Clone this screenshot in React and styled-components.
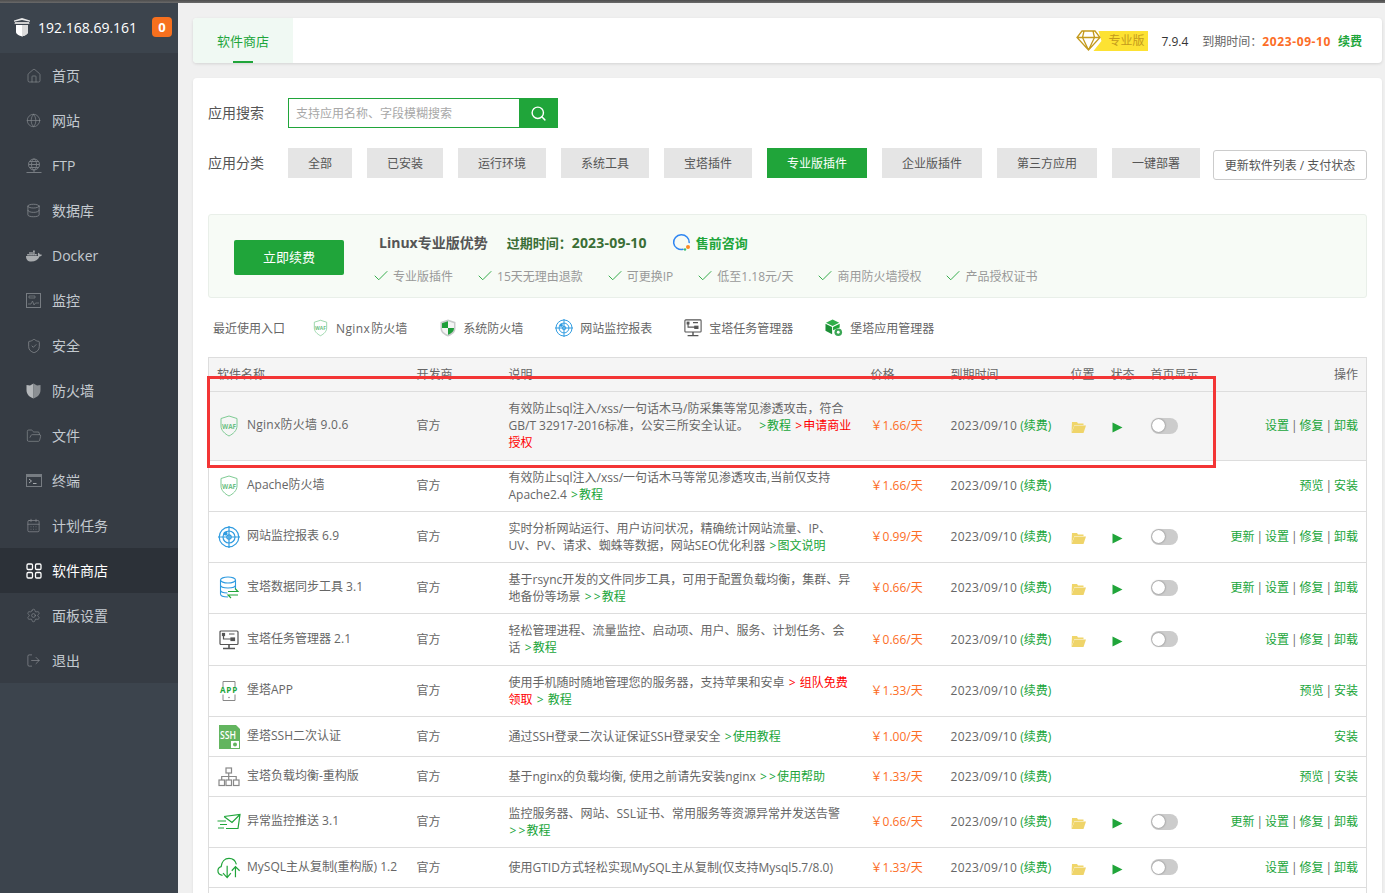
import React from 'react';
import styled, { createGlobalStyle } from 'styled-components';
import {
  House,
  Globe,
  Database,
  ShieldCheck,
  FolderOpen,
  CalendarDays,
  Settings,
  LogOut,
  Search,
  Check,
} from 'lucide-react';
import { FaDocker } from 'react-icons/fa';

const GREEN = '#20a53a';
const ORANGE = '#fc6d26';

const GlobalStyle = createGlobalStyle`
  html, body {
    margin: 0;
    padding: 0;
    height: 893px;
    overflow: hidden;
    background: #f0f0f0;
    font-family: "Open Sans", "Noto Sans CJK SC", sans-serif;
    font-size: 12px;
    color: #666;
  }
  * { box-sizing: border-box; }
`;

/* ---------- drawn icons ---------- */

const LogoIcon = () => (
  <svg width="18" height="20" viewBox="1 0 18 20">
    <path d="M2 3.500 10 1l8 2.500v1.200L10 3 2 4.700z" fill="#e8e8e8" />
    <path d="M3 5h14l.5 2H2.500z" fill="#cfcfcf" />
    <path d="M4 8h12v7c0 2-3 3.500-6 4.500-3-1-6-2.500-6-4.500z" fill="#fff" />
    <path d="M10 8h6v7c0 2-3 3.500-6 4.500z" fill="#dcdcdc" />
  </svg>
);

const FtpIcon = () => (
  <svg width="16" height="16" viewBox="0 0 16 16" fill="none" stroke="#777c82" strokeWidth="1">
    <circle cx="8" cy="6.500" r="5.500" />
    <ellipse cx="8" cy="6.500" rx="2.500" ry="5.500" />
    <path d="M2.500 6.500h11M3.500 3.500h9M3.500 9.500h9M8 12v2M0.500 14.500h15" />
  </svg>
);

const MonitorIcon = () => (
  <svg width="15" height="15" viewBox="0 0 15 15" fill="none" stroke="#777c82">
    <rect x="0.500" y="0.500" width="14" height="14" />
    <path d="M3 3h6v2H3zM2 11h3l1.500-3 1.500 4 1.500-2H13" strokeWidth="0.800" />
  </svg>
);

const FirewallIcon = () => (
  <svg width="15" height="16" viewBox="0 0 15 16">
    <path d="M0.500 2 4 2.500 7.500 0.500v15C3 14 0.500 11 0.500 7z" fill="#b4b7ba" />
    <path d="M14.500 2 11 2.500 7.500 0.500v15C12 14 14.500 11 14.500 7z" fill="#8b8f93" />
  </svg>
);

const TerminalIcon = () => (
  <svg width="16" height="13" viewBox="0 0 16 13" fill="none">
    <rect x="0.500" y="0.500" width="15" height="12" stroke="#777c82" />
    <rect x="0.500" y="0.500" width="15" height="2.500" fill="#777c82" />
    <path d="M3 5l2.500 2L3 9M7 9.500h3.500" stroke="#a5a9ad" />
  </svg>
);

const GridIcon = () => (
  <svg width="16" height="16" viewBox="0 0 16 16" fill="none" stroke="#fff" strokeWidth="1.300">
    <rect x="1" y="1" width="5.500" height="5.500" rx="1.200" />
    <rect x="9.500" y="1" width="5.500" height="5.500" rx="1.200" />
    <rect x="1" y="9.500" width="5.500" height="5.500" rx="1.200" />
    <rect x="9.500" y="9.500" width="5.500" height="5.500" rx="1.200" />
  </svg>
);

const DiamondIcon = () => (
  <svg width="25" height="21" viewBox="0 0 25 21" fill="none" stroke="#c49a1d" strokeWidth="1.300">
    <path d="M6 1h13l5 6.500L12.500 20 1 7.500zM1 7.500h23M8 1 6.500 7.500l6 12.500 6-12.500L17 1" />
  </svg>
);

const ChatIcon = () => (
  <svg width="20" height="19" viewBox="0 0 20 19" fill="none">
    <path d="M11 16.300A7.800 7.300 0 1 1 17.200 9.500" stroke="#2f86f2" strokeWidth="1.500" strokeLinecap="round" />
    <circle cx="16" cy="14" r="2" fill="#fc8a26" />
    <circle cx="13" cy="16.500" r="1.200" fill="#3cc06b" />
  </svg>
);

const WafIcon = ({ size = 22 }) => (
  <svg width={size} height={size} viewBox="0 0 22 22" fill="none">
    <path d="M11 1 19 3.500V11c0 4.500-4 8-8 10-4-2-8-5.500-8-10V3.500z" stroke="#7fcb94" strokeWidth="1" />
    <text x="11" y="13.500" textAnchor="middle" fontSize="7.500" fontWeight="700" fill="#6cc084" fontFamily="Open Sans" textLength="14" lengthAdjust="spacingAndGlyphs">WAF</text>
  </svg>
);

const RadarIcon = ({ size = 22 }) => (
  <svg width={size} height={size} viewBox="0 0 22 22" fill="none" stroke="#2f9be0" strokeWidth="1.200">
    <circle cx="11" cy="11" r="9.800" />
    <circle cx="11" cy="11" r="6" />
    <circle cx="11" cy="11" r="2.200" />
    <path d="M11 0v22M0 11h22" />
    <circle cx="7.500" cy="7.500" r="1.500" fill="#2f9be0" />
  </svg>
);

const SyncIcon = () => (
  <svg width="22" height="24" viewBox="0 0 22 24" fill="none" stroke="#2f9be0" strokeWidth="1.100">
    <ellipse cx="10" cy="4" rx="7.500" ry="3" />
    <path d="M2.500 4v14c0 2 3.500 3 7.500 3M17.500 4v9M2.500 9c0 2 3.500 3 7.500 3s7.500-1 7.500-3M2.500 14c0 2 3.500 3 7 3" />
    <path d="M10 15.500h10l-3-3M20 19H10l3 3" stroke="#20a53a" />
  </svg>
);

const TaskIcon = ({ size = 20 }) => (
  <svg width={size} height={size} viewBox="0 0 20 20" fill="none" stroke="#555" strokeWidth="1.200">
    <rect x="1" y="1" width="18" height="13.500" rx="1" />
    <path d="M4.500 4v5h8M10 4h5.500" />
    <rect x="3.500" y="3.500" width="2" height="2" fill="#555" />
    <rect x="12" y="8" width="3.500" height="2.500" fill="#555" />
    <path d="M10 14.500V18M4 18.500h12" strokeWidth="1.600" />
  </svg>
);

const CubeIcon = () => (
  <svg width="18" height="18" viewBox="0 0 19 19">
    <path d="M8 0.500 15 4 8 7.500 1 4z" fill="#2fae4a" />
    <path d="M0.500 5 7.500 8.500V16L0.500 12.500z" fill="#1c8f36" />
    <path d="M15.500 5 8.500 8.500V12l7-3z" fill="#20a53a" />
    <circle cx="14" cy="14" r="4" fill="#3aa655" />
    <circle cx="14" cy="14" r="1.500" fill="#fff" />
  </svg>
);

const GuardIcon = () => (
  <svg width="16" height="18" viewBox="0 0 16 18">
    <path d="M8 0.500 15.500 3v6.500c0 4-3.500 6.500-7.500 8-4-1.500-7.500-4-7.500-8V3z" fill="#c9cbcc" />
    <path d="M8 2.300 2 4.300V9h6zM8 9v6.800c3-1.200 6-3.200 6-6.800z" fill="#1f9e3a" />
    <path d="M8 2.300V9h6V4.300zM8 9H2c0 3.600 3 5.600 6 6.800z" fill="#f4f4f4" />
  </svg>
);

const AppIcon = () => (
  <svg width="20" height="22" viewBox="0 0 20 22" fill="none">
    <path d="M4 7V1.500h12V7M4 14.500v6h12v-6" stroke="#888" />
    <circle cx="10" cy="17.500" r="0.800" fill="#888" />
    <text x="10" y="13" textAnchor="middle" fontSize="8" fontWeight="700" fill="#20a53a" fontFamily="Open Sans" letterSpacing="0.800">APP</text>
  </svg>
);

const SshIcon = () => (
  <svg width="21" height="24" viewBox="0 0 21 24">
    <path d="M0 0h17l4 4v20H0z" fill="#63b55f" />
    <text x="1" y="13.500" fontSize="11" fontWeight="600" fill="#fff" fontFamily="Open Sans" textLength="16" lengthAdjust="spacingAndGlyphs">SSH</text>
    <rect x="12" y="16" width="8" height="7" fill="#fff" />
    <circle cx="16" cy="19.500" r="2" fill="#63b55f" />
  </svg>
);

const TreeIcon = () => (
  <svg width="22" height="20" viewBox="0 0 22 20" fill="none" stroke="#888" strokeWidth="1.200">
    <rect x="8" y="1" width="5.500" height="5" />
    <rect x="1" y="13" width="5.500" height="5.500" />
    <rect x="8" y="13" width="5.500" height="5.500" />
    <rect x="15.500" y="13" width="5.500" height="5.500" />
    <path d="M10.700 6v7M3.700 13V9.500h14.500V13" />
  </svg>
);

const MailIcon = () => (
  <svg width="24" height="18" viewBox="0 0 24 18" fill="none" stroke="#20a53a" strokeWidth="1.200">
    <path d="M7 3.500 23 1.500 21 15.500H9M7 3.500l8 6 8-8M0.500 8H9M3 11.500h7M1 15h6" />
  </svg>
);

const CloudIcon = () => (
  <svg width="26" height="24" viewBox="0 0 26 24" fill="none" stroke="#20a53a" strokeWidth="1.300">
    <path d="M6 20C3 19.500 1 17.500 1 15c0-2.500 1.500-4 3.500-4.500C5 5 8.500 1.500 13 1.500c4 0 7 2.500 8 6.500M11 9.500V22M6.500 17.500 11 22.500l4-5M20 22V11M16 15l4-4.500 4.500 4.500" />
  </svg>
);

const FolderIcon = () => (
  <svg width="15" height="11" viewBox="0 0 15 11">
    <path d="M1 0h5l1 1.500h5.500V3H3.500L0.500 10.500z" fill="#f0d66a" />
    <path d="M3.500 3.500H15L12.500 11H0.500z" fill="#efd469" />
  </svg>
);

const PlayIcon = () => (
  <svg width="12" height="11" viewBox="0 0 12 11">
    <path d="M1.500 0.500 11.500 5.500 1.500 10.500z" fill={GREEN} />
  </svg>
);

/* ---------- data ---------- */

const menu = [
  { label: '首页', icon: <House size={16} strokeWidth={1} color="#8a8e93" /> },
  { label: '网站', icon: <Globe size={15} strokeWidth={1} color="#8a8e93" /> },
  { label: 'FTP', latin: true, icon: <FtpIcon /> },
  { label: '数据库', icon: <Database size={15} strokeWidth={1.200} color="#8a8e93" /> },
  { label: 'Docker', latin: true, icon: <FaDocker size={16} color="#a9acaf" /> },
  { label: '监控', icon: <MonitorIcon /> },
  { label: '安全', icon: <ShieldCheck size={16} strokeWidth={1.100} color="#8a8e93" /> },
  { label: '防火墙', icon: <FirewallIcon /> },
  { label: '文件', icon: <FolderOpen size={16} strokeWidth={1} color="#8a8e93" /> },
  { label: '终端', icon: <TerminalIcon /> },
  { label: '计划任务', icon: <CalendarDays size={15} strokeWidth={1.100} color="#8a8e93" /> },
  { label: '软件商店', icon: <GridIcon />, active: true },
  { label: '面板设置', icon: <Settings size={15} strokeWidth={1} color="#8a8e93" /> },
  { label: '退出', icon: <LogOut size={15} strokeWidth={1.100} color="#8a8e93" /> },
];

const categories = ['全部', '已安装', '运行环境', '系统工具', '宝塔插件', '专业版插件', '企业版插件', '第三方应用', '一键部署'];
const perks = ['专业版插件', '15天无理由退款', '可更换IP', '低至1.18元/天', '商用防火墙授权', '产品授权证书'];

const G = styled.a`
  color: ${GREEN};
`;
const R = styled.a`
  color: #f00;
`;
const Ar = styled.span`
  display: inline-block;
  width: 9px;
  text-align: center;
`;

const plugins = [
  {
    h: 69, hover: true, icon: <WafIcon />, name: 'Nginx防火墙 9.0.6', spaced: true, price: '1.66', running: true,
    ops: ['设置', '修复', '卸载'],
    desc: <>有效防止sql注入/xss/一句话木马/防采集等常见渗透攻击，符合<br />GB/T 32917-2016标准，公安三所安全认证。&nbsp;&nbsp; <G><Ar>&gt;</Ar>教程</G> <R><Ar>&gt;</Ar>申请商业</R><br /><R>授权</R></>,
  },
  {
    h: 51, icon: <WafIcon />, name: 'Apache防火墙', price: '1.66',
    ops: ['预览', '安装'],
    desc: <>有效防止sql注入/xss/一句话木马等常见渗透攻击,当前仅支持<br />Apache2.4 <G><Ar>&gt;</Ar>教程</G></>,
  },
  {
    h: 51, icon: <RadarIcon />, name: '网站监控报表 6.9', price: '0.99', running: true,
    ops: ['更新', '设置', '修复', '卸载'],
    desc: <>实时分析网站运行、用户访问状况，精确统计网站流量、IP、<br />UV、PV、请求、蜘蛛等数据，网站SEO优化利器 <G><Ar>&gt;</Ar>图文说明</G></>,
  },
  {
    h: 51, icon: <SyncIcon />, name: '宝塔数据同步工具 3.1', price: '0.66', running: true,
    ops: ['更新', '设置', '修复', '卸载'],
    desc: <>基于rsync开发的文件同步工具，可用于配置负载均衡，集群、异<br />地备份等场景 <G><Ar>&gt;</Ar><Ar>&gt;</Ar>教程</G></>,
  },
  {
    h: 52, icon: <TaskIcon />, name: '宝塔任务管理器 2.1', price: '0.66', running: true,
    ops: ['设置', '修复', '卸载'],
    desc: <>轻松管理进程、流量监控、启动项、用户、服务、计划任务、会<br />话 <G><Ar>&gt;</Ar>教程</G></>,
  },
  {
    h: 51, icon: <AppIcon />, name: '堡塔APP', price: '1.33',
    ops: ['预览', '安装'],
    desc: <>使用手机随时随地管理您的服务器，支持苹果和安卓 <R><Ar>&gt;</Ar> 组队免费</R><br /><R>领取</R> <G><Ar>&gt;</Ar> 教程</G></>,
  },
  {
    h: 40, icon: <SshIcon />, name: '堡塔SSH二次认证', price: '1.00',
    ops: ['安装'],
    desc: <>通过SSH登录二次认证保证SSH登录安全 <G><Ar>&gt;</Ar>使用教程</G></>,
  },
  {
    h: 40, icon: <TreeIcon />, name: '宝塔负载均衡-重构版', price: '1.33',
    ops: ['预览', '安装'],
    desc: <>基于nginx的负载均衡, 使用之前请先安装nginx <G><Ar>&gt;</Ar><Ar>&gt;</Ar>使用帮助</G></>,
  },
  {
    h: 51, icon: <MailIcon />, name: '异常监控推送 3.1', price: '0.66', running: true,
    ops: ['更新', '设置', '修复', '卸载'],
    desc: <>监控服务器、网站、SSL证书、常用服务等资源异常并发送告警<br /><G><Ar>&gt;</Ar><Ar>&gt;</Ar>教程</G></>,
  },
  {
    h: 40, icon: <CloudIcon />, name: 'MySQL主从复制(重构版) 1.2', price: '1.33', running: true,
    ops: ['设置', '修复', '卸载'],
    desc: <>使用GTID方式轻松实现MySQL主从复制(仅支持Mysql5.7/8.0)</>,
  },
];

const columns = [200, 92, 362, 80, 120, 40, 40, 60, 164];

/* ---------- page ---------- */

export default function App() {
  return (
    <Page>
      <GlobalStyle />
      <TopStrip />
      <Body>
        <Aside>
          <AsideHead>
            <LogoIcon />
            <Host>192.168.69.161</Host>
            <Badge>0</Badge>
          </AsideHead>
          <Nav>
            {menu.map(item => (
              <NavItem key={item.label} $active={item.active}>
                <NavIcon>{item.icon}</NavIcon>
                <NavLabel $latin={item.latin}>{item.label}</NavLabel>
              </NavItem>
            ))}
          </Nav>
        </Aside>

        <Main>
          <TabCard>
            <Tab>软件商店</Tab>
            <VipInfo>
              <Vip>
                <DiamondSlot><DiamondIcon /></DiamondSlot>
                <VipTag>专业版</VipTag>
              </Vip>
              <Version>7.9.4</Version>
              <span>到期时间：</span>
              <Expire>2023-09-10</Expire>
              <Renew>续费</Renew>
            </VipInfo>
          </TabCard>

          <Card>
            <FormRow>
              <FormLabel>应用搜索</FormLabel>
              <SearchBox>
                <SearchInput placeholder="支持应用名称、字段模糊搜索" />
                <SearchButton><Search size={17} strokeWidth={2} color="#fff" /></SearchButton>
              </SearchBox>
            </FormRow>
            <CategoryRow>
              <FormLabel>应用分类</FormLabel>
              {categories.map(c => (
                <Category key={c} $active={c === '专业版插件'}>{c}</Category>
              ))}
              <UpdateButton>更新软件列表 / 支付状态</UpdateButton>
            </CategoryRow>

            <Banner>
              <RenewButton>立即续费</RenewButton>
              <BannerInfo>
                <BannerTitle>
                  <span>Linux专业版优势</span>
                  <BannerDate>过期时间：<BannerDay>2023-09-10</BannerDay></BannerDate>
                  <Consult><ChatIcon />售前咨询</Consult>
                </BannerTitle>
                <Perks>
                  {perks.map(p => (
                    <Perk key={p}><PerkCheck size={18} strokeWidth={1.200} color={GREEN} />{p}</Perk>
                  ))}
                </Perks>
              </BannerInfo>
            </Banner>

            <Recent>
              <RecentLabel>最近使用入口</RecentLabel>
              <RecentItem><RecentIcon $w={17}><WafIcon size={18} /></RecentIcon><Latin>Nginx</Latin>防火墙</RecentItem>
              <RecentItem><RecentIcon $w={17}><GuardIcon /></RecentIcon>系统防火墙</RecentItem>
              <RecentItem><RecentIcon $w={18}><RadarIcon size={18} /></RecentIcon>网站监控报表</RecentItem>
              <RecentItem><RecentIcon $w={18}><TaskIcon size={18} /></RecentIcon>宝塔任务管理器</RecentItem>
              <RecentItem><RecentIcon $w={18}><CubeIcon /></RecentIcon>堡塔应用管理器</RecentItem>
            </Recent>

            <Table>
              <colgroup>
                {columns.map((w, i) => <col key={i} width={w} />)}
              </colgroup>
              <thead>
                <tr>
                  <Th>软件名称</Th>
                  <Th>开发商</Th>
                  <Th>说明</Th>
                  <Th>价格</Th>
                  <Th>到期时间</Th>
                  <Th>位置</Th>
                  <Th>状态</Th>
                  <Th>首页显示</Th>
                  <Th $right>操作</Th>
                </tr>
              </thead>
              <tbody>
                {plugins.map(p => (
                  <Row key={p.name} $h={p.h} $hover={p.hover}>
                    <NameTd>
                      <NameCell>
                        <NameIcon>{p.icon}</NameIcon>
                        <NameText $spaced={p.spaced}>{p.name}</NameText>
                      </NameCell>
                    </NameTd>
                    <Td>官方</Td>
                    <Td><Desc>{p.desc}</Desc></Td>
                    <Td><Price>￥{p.price}/天</Price></Td>
                    <Td><DateText>2023/09/10</DateText> <G>(续费)</G></Td>
                    <Td>{p.running && <IconCell><FolderIcon /></IconCell>}</Td>
                    <Td>{p.running && <IconCell><PlayIcon /></IconCell>}</Td>
                    <Td>{p.running && <Toggle />}</Td>
                    <Td $right>
                      {p.ops.map((op, i) => (
                        <React.Fragment key={op}>
                          {i > 0 && <Sep>|</Sep>}
                          <G>{op}</G>
                        </React.Fragment>
                      ))}
                    </Td>
                  </Row>
                ))}
                <Row $h={40}><Td colSpan={9} /></Row>
              </tbody>
            </Table>
          </Card>
        </Main>
      </Body>
      <RedMark />
    </Page>
  );
}

const Page = styled.div`
  position: relative;
  width: 1385px;
  height: 893px;
  overflow: hidden;
`;

const TopStrip = styled.div`
  height: 3px;
  background: linear-gradient(#4d4d4d, #6a6a6a);
`;

const Body = styled.div`
  display: flex;
  height: 890px;
`;

const Aside = styled.aside`
  flex: 0 0 178px;
  background: #3c444d;
  color: #c4cad0;
  font-size: 14px;
`;

const AsideHead = styled.div`
  display: flex;
  align-items: center;
  height: 50px;
  padding: 0 6px 2px 13px;
`;

const Host = styled.span`
  margin-left: 7px;
  color: #fff;
  font-size: 14px;
`;

const Badge = styled.span`
  margin-left: auto;
  width: 20px;
  height: 20px;
  border-radius: 4px;
  background: #f7701e;
  color: #fff;
  font-size: 13px;
  font-weight: 700;
  line-height: 20px;
  text-align: center;
`;

const Nav = styled.nav`
  background: #363c44;
`;

const NavItem = styled.div`
  display: flex;
  align-items: center;
  height: 45px;
  padding-left: 25px;
  background: ${props => (props.$active ? '#2c3138' : 'transparent')};
  color: ${props => (props.$active ? '#fff' : '#c4cad0')};
`;

const NavIcon = styled.span`
  display: flex;
  justify-content: center;
  width: 17px;
  margin-right: 10px;
`;

const NavLabel = styled.span`
  padding-bottom: ${props => (props.$latin ? 0 : 2)}px;
`;

const Main = styled.main`
  flex: 1;
  min-width: 0;
  padding: 15px 3px 0 15px;
`;

const TabCard = styled.div`
  display: flex;
  justify-content: space-between;
  align-items: stretch;
  height: 45px;
  background: #fff;
  border-radius: 4px;
  box-shadow: 0 1px 3px rgba(0, 0, 0, 0.12);
  overflow: hidden;
`;

const Tab = styled.div`
  position: relative;
  width: 100px;
  background: #f0f9f3;
  color: ${GREEN};
  font-size: 13px;
  line-height: 46px;
  text-align: center;

  &::after {
    content: '';
    position: absolute;
    left: 40px;
    bottom: 0;
    width: 20px;
    height: 2px;
    background: ${GREEN};
  }
`;

const VipInfo = styled.div`
  display: flex;
  align-items: center;
  padding: 1px 20px 0 0;
`;

const Vip = styled.div`
  position: relative;
  width: 72px;
  height: 20px;
  margin-right: 13px;
`;

const DiamondSlot = styled.span`
  position: absolute;
  left: 0;
  top: -1px;
  z-index: 1;
`;

const VipTag = styled.span`
  position: absolute;
  left: 17px;
  top: 0;
  width: 55px;
  height: 20px;
  padding-left: 15px;
  background: #fde233;
  color: #c49a1d;
  line-height: 20px;
  clip-path: polygon(5px 0, 100% 0, 100% 100%, 0 100%, 8px 50%);
`;

const Version = styled.span`
  margin-right: 14px;
  color: #333;
`;

const Expire = styled.span`
  margin-right: 7px;
  color: ${ORANGE};
  font-weight: 700;
  letter-spacing: 0.6px;
`;

const Renew = styled.span`
  color: ${GREEN};
  font-weight: 700;
`;

const Card = styled.div`
  height: 900px;
  margin-top: 15px;
  padding: 20px 15px 0;
  background: #fff;
  border-radius: 4px;
  box-shadow: 0 1px 3px rgba(0, 0, 0, 0.08);
`;

const FormRow = styled.div`
  display: flex;
  align-items: center;
  height: 30px;
`;

const CategoryRow = styled(FormRow)`
  gap: 15px;
  margin-top: 20px;
`;

const FormLabel = styled.span`
  width: 80px;
  padding-bottom: 2px;
  color: #555;
  font-size: 14px;

  ${CategoryRow} & {
    margin-right: -15px;
  }
`;

const SearchBox = styled.div`
  display: flex;
  width: 270px;
  height: 30px;
`;

const SearchInput = styled.input`
  flex: 1;
  min-width: 0;
  padding: 0 7px;
  border: 1px solid ${GREEN};
  border-right: 0;
  outline: none;
  font: inherit;
  color: #666;

  &::placeholder {
    color: #a8a8a8;
  }
`;

const SearchButton = styled.div`
  display: flex;
  align-items: center;
  justify-content: center;
  width: 39px;
  background: ${GREEN};
`;

const Category = styled.div`
  padding: 0 20px;
  height: 30px;
  line-height: 31px;
  background: ${props => (props.$active ? GREEN : '#e5e5e5')};
  color: ${props => (props.$active ? '#fff' : '#555')};
`;

const UpdateButton = styled.div`
  width: 154px;
  height: 30px;
  margin: 4px 0 0 -2px;
  line-height: 29px;
  border: 1px solid #ccc;
  border-radius: 3px;
  color: #555;
  text-align: center;
  white-space: nowrap;
`;

const Banner = styled.div`
  display: flex;
  align-items: flex-start;
  height: 84px;
  margin-top: 36px;
  padding: 25px 0 0 25px;
  background: #f7fbf6;
  border: 1px solid #e9efe9;
  border-radius: 3px;
`;

const RenewButton = styled.div`
  width: 110px;
  height: 35px;
  background: ${GREEN};
  border-radius: 2px;
  color: #fff;
  font-size: 13px;
  line-height: 35px;
  text-align: center;
`;

const BannerInfo = styled.div`
  margin: -8px 0 0 31px;
`;

const BannerTitle = styled.div`
  display: flex;
  align-items: center;
  gap: 19px;
  height: 20px;
  margin-left: 4px;
  color: #555;
  font-size: 14px;
  font-weight: 700;
`;

const BannerDate = styled.span`
  color: #3a6e35;
  font-size: 13px;
`;

const BannerDay = styled.span`
  font-size: 14px;
  letter-spacing: 0.2px;
`;

const Consult = styled.span`
  display: flex;
  align-items: center;
  gap: 4px;
  margin-left: 6px;
  color: ${GREEN};
  font-size: 13px;
`;

const Perks = styled.div`
  display: flex;
  gap: 26px;
  margin-top: 15px;
`;

const Perk = styled.span`
  display: flex;
  align-items: center;
  gap: 4px;
  height: 18px;
  color: #999;
`;

const PerkCheck = styled(Check)`
  margin: 0 -1px 0 -3px;
`;

const Recent = styled.div`
  display: flex;
  align-items: center;
  gap: 32px;
  height: 30px;
  margin-top: 15px;
  padding-left: 5px;
`;

const RecentLabel = styled.span`
  margin-right: -5px;
`;

const RecentItem = styled.span`
  display: flex;
  align-items: center;
  gap: 7px;
`;

const RecentIcon = styled.span`
  display: flex;
  justify-content: center;
  width: ${props => props.$w}px;
`;

const Latin = styled.span`
  margin-right: -6px;
  letter-spacing: 0.4px;
`;

const Table = styled.table`
  width: 1158px;
  margin-top: 14px;
  border: 1px solid #ddd;
  border-collapse: collapse;
  table-layout: fixed;
`;

const Th = styled.th`
  height: 34px;
  padding: 0 8px 2px;
  border-bottom: 1px solid #ddd;
  background: #f5f5f5;
  color: #666;
  font-weight: 400;
  text-align: ${props => (props.$right ? 'right' : 'left')};
  white-space: nowrap;
`;

const Row = styled.tr`
  height: ${props => props.$h}px;
  background: ${props => (props.$hover ? '#f5f5f5' : '#fff')};
  border-bottom: 1px solid #ddd;
`;

const Td = styled.td`
  padding: 0 8px 1px;
  line-height: 17px;
  text-align: ${props => (props.$right ? 'right' : 'left')};
  white-space: nowrap;
`;

const NameTd = styled(Td)`
  padding-bottom: 0;
`;

const NameCell = styled.div`
  display: flex;
  align-items: center;
  gap: 6px;
`;

const NameIcon = styled.span`
  display: flex;
  align-items: center;
  justify-content: center;
  flex: 0 0 24px;
  min-width: 0;
  height: 24px;
`;

const NameText = styled.span`
  padding-bottom: 3px;
  letter-spacing: ${props => (props.$spaced ? '0.25px' : 0)};
`;

const Desc = styled.div`
  line-height: 17px;
`;

const Price = styled.span`
  color: ${ORANGE};
`;

const DateText = styled.span`
  letter-spacing: 0.3px;
`;

const IconCell = styled.span`
  display: flex;
  padding: 4px 0 0;
`;

const Toggle = styled.div`
  position: relative;
  width: 27px;
  height: 16px;
  border-radius: 8px;
  background: #ccc;

  &::after {
    content: '';
    position: absolute;
    left: 1px;
    top: 1.500px;
    width: 13px;
    height: 13px;
    border-radius: 50%;
    background: #fff;
    box-shadow: 0 0 2px rgba(0, 0, 0, 0.5);
  }
`;

const Sep = styled.span`
  display: inline-block;
  width: 10.500px;
  color: #666;
  text-align: center;
`;

const RedMark = styled.div`
  position: absolute;
  left: 207px;
  top: 376px;
  width: 1009px;
  height: 92px;
  border: 3px solid #f33535;
  pointer-events: none;
`;
